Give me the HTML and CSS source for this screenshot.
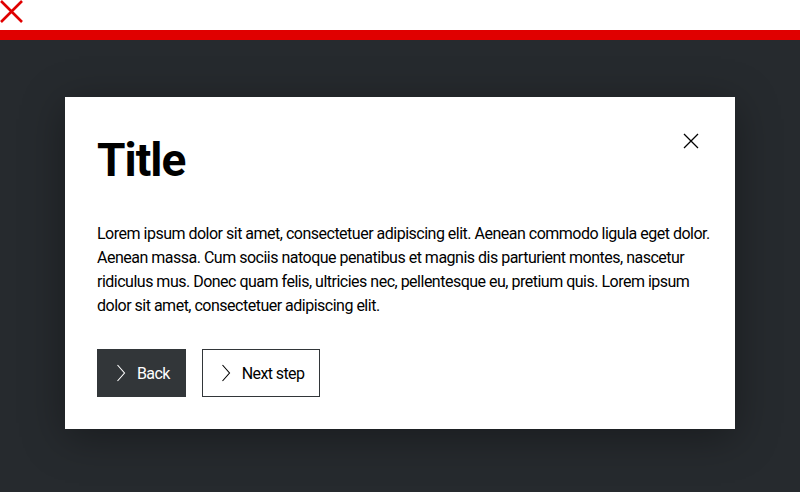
FILE: index.html
```html
<!DOCTYPE html>
<html>
<head>
<meta charset="utf-8">
<link rel="stylesheet" href="styles.css">
</head>
<body>
<div class="top">
  <svg class="mark" width="24" height="24" viewBox="0 0 24 24"><path d="M1 1 L22 22 M22 1 L1 22" stroke="#e00000" stroke-width="2.6" fill="none"/></svg>
</div>
<div class="bar"></div>
<main class="stage">
  <section class="modal">
    <button class="close" aria-label="Close">
      <svg width="16" height="16" viewBox="0 0 16 16"><path d="M1 1 L15 15 M15 1 L1 15" stroke="#000" stroke-width="1.3" fill="none"/></svg>
    </button>
    <h1 class="title">Title</h1>
    <p class="text">Lorem ipsum dolor sit amet, consectetuer adipiscing elit. Aenean commodo ligula eget dolor. Aenean massa. Cum sociis natoque penatibus et magnis dis parturient montes, nascetur ridiculus mus. Donec quam felis, ultricies nec, pellentesque eu, pretium quis. Lorem ipsum dolor sit amet, consectetuer adipiscing elit.</p>
    <div class="actions">
      <button class="btn btn-dark"><svg width="10" height="18" viewBox="0 0 10 18"><path d="M1.5 1 L8.5 9 L1.5 17" stroke="#fff" stroke-width="1.1" fill="none"/></svg><span>Back</span></button>
      <button class="btn btn-light"><svg width="10" height="18" viewBox="0 0 10 18"><path d="M1.5 1 L8.5 9 L1.5 17" stroke="#000" stroke-width="1.1" fill="none"/></svg><span>Next step</span></button>
    </div>
  </section>
</main>
</body>
</html>
```
FILE: styles.css
```css
* { box-sizing: border-box; }
html, body { margin: 0; padding: 0; }
body {
  width: 800px;
  height: 492px;
  overflow: hidden;
  font-family: Roboto, "Liberation Sans", sans-serif;
  background: #262a2e;
}
.top {
  height: 30px;
  background: #fff;
}
.mark { display: block; }
.bar {
  height: 10px;
  background: #e00000;
}
.stage {
  padding: 57px 65px 0 65px;
}
.modal {
  position: relative;
  background: #fff;
  width: 670px;
  height: 332px;
  padding: 32px 20px 32px 32px;
  box-shadow: 0 8px 40px rgba(0,0,0,0.35);
}
.close {
  position: absolute;
  top: 20px;
  right: 20px;
  width: 48px;
  height: 48px;
  border: 0;
  background: transparent;
  padding: 0;
  display: flex;
  align-items: center;
  justify-content: center;
}
.title {
  margin: 0;
  font-size: 46px;
  line-height: 62px;
  font-weight: 700;
  color: #000;
  letter-spacing: -1px;
}
.text {
  margin: 31px 0 0 0;
  font-size: 16px;
  line-height: 24px;
  color: #000;
  letter-spacing: -0.5px;
}
.actions {
  display: flex;
  gap: 16px;
  margin-top: 31px;
}
.btn {
  height: 48px;
  display: flex;
  align-items: center;
  gap: 11px;
  padding: 0 15px 0 18px;
  font-family: inherit;
  font-size: 16px;
  letter-spacing: -0.6px;
  border: 1px solid #323639;
}
.btn-dark { background: #323639; color: #fff; }
.btn-light { background: #fff; color: #000; }
```
